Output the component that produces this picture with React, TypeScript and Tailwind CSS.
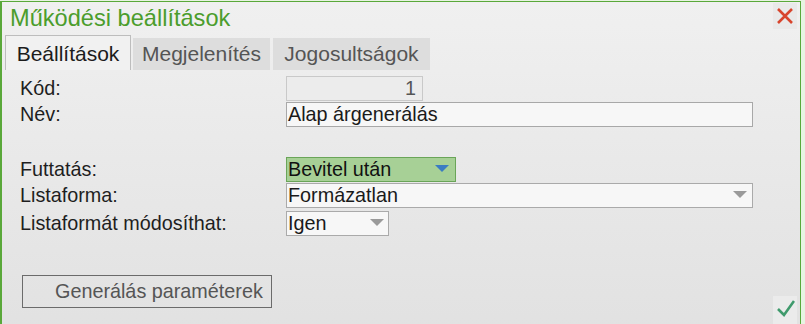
import React from "react";

const font = { fontFamily: '"Liberation Sans", Arial, sans-serif' };

function Arrow({ color }: { color: string }) {
  return (
    <svg width="14" height="8" viewBox="0 0 14 8">
      <polygon points="0,0 14,0 7,7" fill={color} />
    </svg>
  );
}

function Row({ label, children, className = "" }: { label: string; children: React.ReactNode; className?: string }) {
  return (
    <div className={`flex items-center h-[26px] ${className}`}>
      <div className="w-[266px] text-[19.8px] leading-[26px] text-[#1e1e1e]">{label}</div>
      {children}
    </div>
  );
}

export default function App() {
  return (
    <div className="w-[805px] h-[324px] bg-[#e8f4e2] pt-px overflow-hidden" style={font}>
      <div className="w-[801px] h-[340px] border-l-2 border-t border-r border-[#5aa83a] bg-gradient-to-b from-[#f0f0f0] to-[#e1e1e1] flex flex-col">
        {/* Title row */}
        <div className="flex items-start justify-between pl-[8px] pr-[3px]">
          <div className="pt-[2px] text-[23.6px] leading-[28px] text-[#4b9d2c]">Működési beállítások</div>
          <div className="mt-[1px] w-[24px] h-[26px] bg-[#e9e9e9] flex items-center justify-center">
            <svg width="18" height="18" viewBox="0 0 18 18">
              <path d="M2 2 L16 16 M16 2 L2 16" stroke="#d8452d" strokeWidth="2.6" strokeLinecap="butt" />
            </svg>
          </div>
        </div>

        {/* Tabs */}
        <div className="flex items-end mt-[3px] ml-[3px] h-[35px]">
          <div className="w-[126px] h-[35px] border-t border-l border-r border-[#bdbdbd] bg-[#f1f1f1] pt-[2px] text-center text-[21px] leading-[32px] text-[#1c1c1c]">
            Beállítások
          </div>
          <div className="ml-[2px] w-[137px] h-[32px] bg-[#dddddd] text-center text-[21px] leading-[32px] text-[#555555]">
            Megjelenítés
          </div>
          <div className="ml-[3px] w-[157px] h-[32px] bg-[#dddddd] text-center text-[21px] leading-[32px] text-[#555555]">
            Jogosultságok
          </div>
        </div>

        {/* Form */}
        <div className="flex flex-col pl-[18px] mt-[5px]">
          <Row label="Kód:">
            <div className="w-[137px] h-[25px] border border-[#c9c9c9] bg-[#ececec] text-right pr-[6px] text-[19.8px] leading-[23px] text-[#555555]">
              1
            </div>
          </Row>
          <Row label="Név:">
            <div className="w-[467px] h-[25px] border border-[#a8a8a8] bg-[#f7f7f7] pl-[1px] text-[19.8px] leading-[23px] text-[#1a1a1a]">
              Alap árgenerálás
            </div>
          </Row>

          <Row label="Futtatás:" className="mt-[29px]">
            <div className="w-[170px] h-[25px] border border-[#6aa558] bg-[#a7d096] pl-[1px] pr-[6px] flex items-center justify-between text-[19.8px] leading-[23px] text-[#111111]">
              <span>Bevitel után</span>
              <Arrow color="#3a7cc2" />
            </div>
          </Row>
          <Row label="Listaforma:">
            <div className="w-[467px] h-[25px] border border-[#aaaaaa] bg-[#f7f7f7] pl-[1px] pr-[5px] flex items-center justify-between text-[19.8px] leading-[23px] text-[#1a1a1a]">
              <span>Formázatlan</span>
              <Arrow color="#9a9a9a" />
            </div>
          </Row>
          <Row label="Listaformát módosíthat:" className="mt-[2px]">
            <div className="w-[103px] h-[25px] border border-[#aaaaaa] bg-[#f7f7f7] pl-[1px] pr-[4px] flex items-center justify-between text-[19.8px] leading-[23px] text-[#1a1a1a]">
              <span>Igen</span>
              <Arrow color="#9a9a9a" />
            </div>
          </Row>
        </div>

        {/* Footer */}
        <div className="flex items-start justify-between pl-[20px] pr-[3px] mt-[39px]">
          <div className="w-[250px] h-[33px] border border-[#6b6b6b] pl-[32px] text-[19.8px] leading-[31px] text-[#555555]">
            Generálás paraméterek
          </div>
          <div className="mt-[21px] w-[24px] h-[28px] bg-[#ebebeb] flex items-start justify-center pt-[3px]">
            <svg width="20" height="18" viewBox="0 0 20 18">
              <path d="M3 10 L9 16 L19 2" stroke="#3f9a6c" strokeWidth="2.6" fill="none" />
            </svg>
          </div>
        </div>
      </div>
    </div>
  );
}
